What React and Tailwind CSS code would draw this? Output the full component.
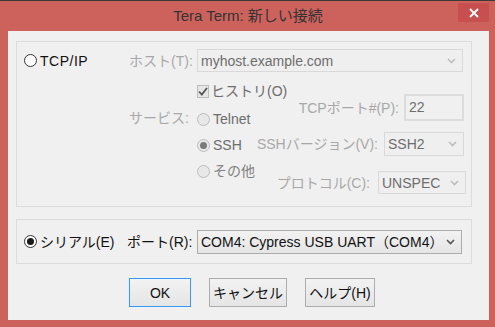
import React from "react";

const font = "font-['Liberation_Sans','Noto_Sans_CJK_JP',sans-serif]";

const Radio = ({ checked, disabled }) => (
  <span
    className={`flex h-[13px] w-[13px] shrink-0 items-center justify-center rounded-full border ${
      disabled ? "border-[#bcbcbc] bg-[#e8e8e8]" : "border-[#333] bg-white"
    }`}
  >
    {checked && (
      <span className={`h-[7px] w-[7px] rounded-full ${disabled ? "bg-[#7a7a7a]" : "bg-[#1a1a1a]"}`}></span>
    )}
  </span>
);

const Arrow = ({ color = "#b8b8b8" }) => (
  <svg width="9" height="6" viewBox="0 0 9 6" className="shrink-0">
    <polyline points="1,1 4.5,4.5 8,1" fill="none" stroke={color} strokeWidth="1.6" />
  </svg>
);

const Combo = ({ value, className = "", enabled }) => (
  <div
    className={`flex items-center border pl-[3px] pr-[6px] ${
      enabled
        ? "border-[#acacac] bg-gradient-to-b from-[#f2f2f2] to-[#e5e5e5] text-[#111]"
        : "border-[#d9d9d9] bg-[#efefef] text-[#6d6d6d]"
    } ${className}`}
  >
    <span className="flex-1 whitespace-nowrap leading-none">{value}</span>
    <Arrow color={enabled ? "#555" : "#bdbdbd"} />
  </div>
);

export default function App() {
  return (
    <div className={`h-[327px] w-[495px] overflow-hidden border-t border-[#3a3a3a] bg-[#cd625c] ${font} text-[14px]`}>
      <div className="flex h-[30px] items-start">
        <div className="flex h-[30px] flex-1 items-center justify-center pl-[38px] text-[15px] text-[#333]">
          Tera Term: 新しい接続
        </div>
        <div className="mr-[6px] mt-[2px] flex h-[19px] w-[31px] items-center justify-center bg-[#c74f4f]">
          <svg width="10" height="10" viewBox="0 0 10 10">
            <path d="M1 1 L9 9 M9 1 L1 9" stroke="#fff" strokeWidth="1.8" />
          </svg>
        </div>
      </div>

      <div className="ml-[8px] h-[289px] w-[481px] bg-[#f0f0f0] pl-[8px] pt-[10px]">
        {/* TCP/IP group */}
        <div className="h-[166px] w-[456px] border border-[#dcdcdc] pl-[7px]">
          <div className="mt-[7px] flex h-[23px] items-center">
            <div className="flex w-[105px] items-center gap-[3px] text-[#111]">
              <Radio />
              <span className="leading-none tracking-[0.5px]">TCP/IP</span>
            </div>
            <span className="w-[64px] whitespace-nowrap leading-none text-[#a8a8a8]">ホスト(T):</span>
            <Combo value="myhost.example.com" className="ml-[4px] h-[23px] w-[266px]" />
          </div>

          <div className="mt-[5px] flex">
            <div className="w-[105px]"></div>
            <div className="w-[68px]">
              <div className="mt-[28px] h-[26px] whitespace-nowrap leading-[26px] text-[#a8a8a8]">サービス:</div>
            </div>
            <div className="w-[59px] text-[#6d6d6d]">
              <div className="flex h-[28px] items-center gap-[2px] whitespace-nowrap">
                <span className="flex h-[13px] w-[13px] items-center justify-center border border-[#bcbcbc] bg-[#e6e6e6]">
                  <svg width="10" height="9" viewBox="0 0 10 9">
                    <polyline points="1,4.5 3.8,7.5 9,1" fill="none" stroke="#555" strokeWidth="1.8" />
                  </svg>
                </span>
                <span className="leading-none">ヒストリ(O)</span>
              </div>
              <div className="flex h-[28px] items-center gap-[3px]">
                <Radio disabled />
                <span className="leading-none">Telnet</span>
              </div>
              <div className="flex h-[24px] items-center gap-[3px]">
                <Radio disabled checked />
                <span className="leading-none">SSH</span>
              </div>
              <div className="flex h-[28px] items-center gap-[3px] whitespace-nowrap text-[#808080]">
                <Radio disabled />
                <span className="leading-none">その他</span>
              </div>
            </div>
            <div className="flex w-[214px] flex-col items-end pr-[6px] text-[#a8a8a8]">
              <div className="mt-[17px] flex h-[27px] items-center gap-[5px]">
                <span className="whitespace-nowrap leading-none">TCPポート#(P):</span>
                <div className="flex h-[27px] w-[60px] items-start border-2 border-[#dcdcdc] bg-[#f0f0f0] pl-[3px] pt-[4px] leading-none text-[#6d6d6d]">
                  22
                </div>
              </div>
              <div className="mt-[11px] flex h-[24px] items-center gap-[6px]">
                <span className="whitespace-nowrap leading-none">SSHバージョン(V):</span>
                <Combo value="SSH2" className="h-[24px] w-[80px]" />
              </div>
              <div className="-mr-[2px] mt-[15px] flex h-[23px] items-center gap-[8px]">
                <span className="whitespace-nowrap leading-none">プロトコル(C):</span>
                <Combo value="UNSPEC" className="h-[23px] w-[88px]" />
              </div>
            </div>
          </div>
        </div>

        {/* Serial group */}
        <div className="mt-[12px] flex h-[45px] w-[456px] items-center border border-[#dcdcdc] pl-[7px]">
          <div className="flex w-[103px] items-center gap-[3px] whitespace-nowrap text-[#111]">
            <Radio checked />
            <span className="leading-none">シリアル(E)</span>
          </div>
          <span className="w-[70px] whitespace-nowrap leading-none text-[#111]">ポート(R):</span>
          <Combo enabled value="COM4: Cypress USB UART（COM4）" className="h-[24px] w-[265px]" />
        </div>

        {/* Buttons */}
        <div className="mt-[14px] flex gap-[18px] pl-[113px] text-[#111]">
          <button className="h-[29px] w-[62px] border border-[#3399ff] bg-gradient-to-b from-[#f2f2f2] to-[#e5e5e5] leading-none">
            OK
          </button>
          <button className="h-[29px] w-[78px] border border-[#acacac] bg-gradient-to-b from-[#f2f2f2] to-[#e5e5e5] leading-none">
            キャンセル
          </button>
          <button className="h-[29px] w-[70px] border border-[#acacac] bg-gradient-to-b from-[#f2f2f2] to-[#e5e5e5] leading-none">
            ヘルプ(H)
          </button>
        </div>
      </div>
    </div>
  );
}
